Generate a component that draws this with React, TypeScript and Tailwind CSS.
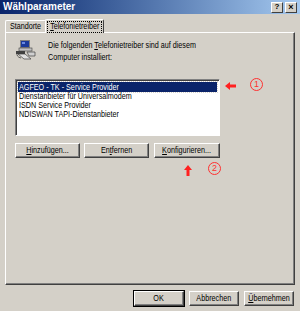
import React from "react";

const font = { fontFamily: '"Liberation Sans", Arial, sans-serif' };

// Tahoma-like narrow text: Liberation Sans squeezed horizontally
const Tx: React.FC<{ children: React.ReactNode; center?: boolean }> = ({ children, center }) => (
  <span
    className={`inline-block whitespace-nowrap scale-x-[0.8] ${center ? "origin-center" : "origin-left"}`}
  >
    {children}
  </span>
);

const Btn: React.FC<{ children: React.ReactNode; className?: string; def?: boolean }> = ({
  children,
  className = "",
  def,
}) => (
  <div
    className={`flex items-center justify-center bg-[#d4d0c8] text-[9px] leading-none text-black border border-t-white border-l-white border-r-[#404040] border-b-[#404040] shadow-[inset_-1px_-1px_0_#808080] ${
      def ? "outline outline-1 outline-black" : ""
    } ${className}`}
  >
    <Tx center>{children}</Tx>
  </div>
);

const ComputerIcon = () => (
  <svg width="22" height="22" viewBox="0 0 22 22">
    <rect x="5" y="1" width="10" height="8" fill="#808080" />
    <rect x="6" y="2" width="8" height="6" fill="#1a3a9a" />
    <rect x="7" y="3" width="3" height="2" fill="#6a8ae0" />
    <rect x="4" y="9" width="13" height="3" fill="#c0c0c0" stroke="#404040" strokeWidth="0.6" />
    <rect x="1" y="12" width="9" height="3" fill="#404040" />
    <path d="M3 15 L9 20 L16 20 L10 15 Z" fill="#e0e0e0" stroke="#404040" strokeWidth="0.7" />
    <path d="M12 13 L20 13 L20 17 L14 17 Z" fill="#d0d0d0" stroke="#404040" strokeWidth="0.7" />
    <path d="M2 13 Q1 18 6 19" fill="none" stroke="#404040" strokeWidth="0.8" />
  </svg>
);

const Circle = ({ n }: { n: string }) => (
  <div className="w-[13px] h-[13px] rounded-full border border-[#ff3030] flex items-center justify-center text-[#ff3030] text-[9px] leading-none">
    {n}
  </div>
);

const ArrowLeft = () => (
  <svg width="11" height="8" viewBox="0 0 11 8">
    <path d="M0 4 L5 0 L5 2.5 L11 2.5 L11 5.5 L5 5.5 L5 8 Z" fill="#ff2020" />
  </svg>
);

const ArrowUp = () => (
  <svg width="8" height="11" viewBox="0 0 8 11">
    <path d="M4 0 L8 5 L5.5 5 L5.5 11 L2.5 11 L2.5 5 L0 5 Z" fill="#ff2020" />
  </svg>
);

export default function App() {
  return (
    <div style={font} className="w-[300px] h-[311px] bg-[#d4d0c8] flex flex-col overflow-hidden">
      {/* title bar */}
      <div className="h-[14px] flex items-center bg-gradient-to-r from-[#0a246a] to-[#a6caf0] px-[3px]">
        <span className="text-white text-[10px] font-bold flex-1 leading-none">Wählparameter</span>
        <div className="flex gap-[2px]">
          <div className="w-[12px] h-[11px] bg-[#d4d0c8] border border-t-white border-l-white border-r-[#404040] border-b-[#404040] text-[8px] font-bold flex items-center justify-center leading-none">?</div>
          <div className="w-[12px] h-[11px] bg-[#d4d0c8] border border-t-white border-l-white border-r-[#404040] border-b-[#404040] text-[9px] font-bold flex items-center justify-center leading-none">×</div>
        </div>
      </div>

      {/* tabs */}
      <div className="flex items-end px-[5px] mt-[4px] h-[14px] text-[9px] leading-none">
        <div className="w-[41px] h-[12px] flex items-center justify-center border border-b-0 border-t-white border-l-white border-r-[#404040] rounded-t-[2px]">
          <Tx center>Standorte</Tx>
        </div>
        <div className="w-[59px] h-[14px] -ml-[1px] flex items-center justify-center border border-b-0 border-t-white border-l-white border-r-[#404040] rounded-t-[2px] relative z-10 bg-[#d4d0c8] mb-[-1px]">
          <div className="w-[53px] h-[10px] flex items-center justify-center outline outline-1 outline-dotted outline-black">
            <Tx center>
              <u>T</u>elefonietreiber
            </Tx>
          </div>
        </div>
      </div>

      {/* panel */}
      <div className="mx-[5px] h-[253px] border border-t-white border-l-white border-r-[#404040] border-b-[#404040] shadow-[inset_-1px_-1px_0_#808080] px-[9px] pt-[6px]">
        <div className="flex gap-[11px]">
          <ComputerIcon />
          <div className="text-[9px] leading-[12px] flex flex-col">
            <Tx>
              Die folgenden <u>T</u>elefonietreiber sind auf diesem
            </Tx>
            <Tx>Computer installiert:</Tx>
          </div>
        </div>

        <div className="flex items-start mt-[16px]">
          <div className="w-[205px] h-[57px] bg-white border border-t-[#808080] border-l-[#808080] border-r-white border-b-white shadow-[inset_1px_1px_0_#404040] p-[2px] text-[9px] leading-[9px]">
            <div className="bg-[#0a246a] text-white px-[1px] h-[10px] flex items-center outline outline-1 outline-dotted outline-[#d4d0c8]">
              <Tx>AGFEO - TK - Service Provider</Tx>
            </div>
            <div className="px-[1px]"><Tx>Dienstanbieter für Universalmodem</Tx></div>
            <div className="px-[1px]"><Tx>ISDN Service Provider</Tx></div>
            <div className="px-[1px]"><Tx>NDISWAN TAPI-Dienstanbieter</Tx></div>
          </div>
          <div className="ml-[5px] mt-[3px]">
            <ArrowLeft />
          </div>
          <div className="ml-[14px] -mt-[1px]">
            <Circle n="1" />
          </div>
        </div>

        <div className="flex gap-[4px] mt-[7px] w-[205px]">
          <Btn className="w-[65px] h-[15px]"><u>H</u>inzufügen...</Btn>
          <Btn className="w-[65px] h-[15px]">En<u>t</u>fernen</Btn>
          <Btn className="w-[66px] h-[15px] ml-[1px]"><u>K</u>onfigurieren...</Btn>
        </div>

        <div className="flex items-start ml-[169px] mt-[4px] gap-[16px]">
          <div className="mt-[3px]">
            <ArrowUp />
          </div>
          <Circle n="2" />
        </div>
      </div>

      {/* footer buttons */}
      <div className="flex justify-end gap-[5px] pr-[6px] mt-[6px]">
        <Btn className="w-[50px] h-[15px]" def>OK</Btn>
        <Btn className="w-[50px] h-[15px]">Abbrechen</Btn>
        <Btn className="w-[50px] h-[15px]"><u>Ü</u>bernehmen</Btn>
      </div>
    </div>
  );
}
